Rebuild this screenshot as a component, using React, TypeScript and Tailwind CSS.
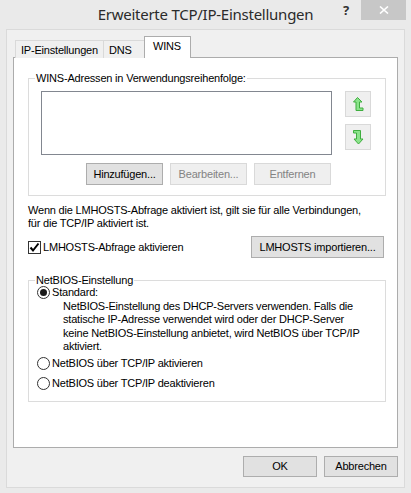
import React from "react";

function UpIcon() {
  return (
    <svg width="11" height="15" viewBox="0 0 11 15">
      <path d="M4.5 0.5 L9 5 L6.5 5 L6.5 11 L10 11 L10 13.5 L3 13.5 L3 5 L0.5 5 Z" fill="#8be38b" stroke="#3fae3f" strokeWidth="1" />
    </svg>
  );
}

function DownIcon() {
  return (
    <svg width="11" height="15" viewBox="0 0 11 15">
      <path d="M0.5 0.5 L7.5 0.5 L7.5 9 L10 9 L5.5 14 L1 9 L3.5 9 L3.5 3 L0.5 3 Z" fill="#8be38b" stroke="#3fae3f" strokeWidth="1" />
    </svg>
  );
}

function Btn({ children, w, disabled }: { children: React.ReactNode; w: string; disabled?: boolean }) {
  return (
    <div
      className={
        "h-[22px] flex items-center justify-center border whitespace-nowrap " +
        w +
        (disabled
          ? " bg-[#efefef] border-[#d9d9d9] text-[#838383]"
          : " bg-[#e1e1e1] border-[#adadad] text-black")
      }
    >
      {children}
    </div>
  );
}

function Radio({ checked }: { checked?: boolean }) {
  return (
    <div className="w-[13px] h-[13px] rounded-full border border-[#333333] bg-white flex items-center justify-center shrink-0">
      {checked ? <div className="w-[7px] h-[7px] rounded-full bg-[#1a1a1a]" /> : null}
    </div>
  );
}

export default function App() {
  return (
    <div className="w-[411px] h-[493px] bg-[#eaeaea] flex flex-col overflow-hidden text-[11px] leading-[13px] tracking-[-0.2px] text-black font-['Liberation_Sans',Arial,sans-serif] whitespace-nowrap">
      {/* Title bar */}
      <div className="relative h-[29px] flex items-center justify-center">
        <span className="text-[15px] tracking-[-0.25px] text-[#2b2b2b] font-['Noto_Sans',sans-serif] -mt-[1px]">
          Erweiterte TCP/IP-Einstellungen
        </span>
        <div className="absolute right-[5px] top-0 flex items-start">
          <span className="w-[16px] mr-[7px] text-center text-[13px] font-bold text-[#333] leading-[20px] font-['Noto_Sans',sans-serif]">?</span>
          <div className="w-[45px] h-[20px] bg-[#c7c7c7] flex items-center justify-center">
            <svg width="10" height="8" viewBox="0 0 10 8">
              <path d="M1 0.5 L9 7.5 M9 0.5 L1 7.5" stroke="white" strokeWidth="1.6" />
            </svg>
          </div>
        </div>
      </div>

      {/* Frame */}
      <div className="mx-[6px] h-[459px] border border-[#dadada] bg-[#f0f0f0] flex flex-col">
        {/* Tabs */}
        <div className="mt-[7px] ml-[8px] h-[21px] flex items-end -mb-px relative z-10">
          <div className="h-[18px] w-[89px] border border-b-0 border-[#d9d9d9] bg-[#f0f0f0] flex items-center pl-[5px] pt-[1px]">
            IP-Einstellungen
          </div>
          <div className="h-[18px] w-[42px] -ml-px border border-b-0 border-[#d9d9d9] bg-[#f0f0f0] flex items-center pl-[5px] pt-[1px]">
            DNS
          </div>
          <div className="h-[22px] w-[47px] -ml-px border border-b-0 border-[#acacac] bg-white flex items-start pl-[8px] pt-[3px]">
            WINS
          </div>
        </div>

        {/* Panel */}
        <div className="ml-[6px] w-[385px] h-[391px] border border-[#acacac] bg-white flex flex-col">
          {/* WINS group */}
          <fieldset className="ml-[14px] mt-[13px] w-[358px] border border-[#dcdcdc] px-[12px] pb-[10px]">
            <legend className="-ml-[6px] px-[1px] leading-[14px]">WINS-Adressen in Verwendungsreihenfolge:</legend>
            <div className="flex mt-[6px]">
              <div className="flex flex-col">
                <div className="w-[291px] h-[64px] border border-[#828790] bg-white" />
                <div className="mt-[8px] flex justify-end gap-[7px] pr-[1px]">
                  <Btn w="w-[77px]">Hinzufügen...</Btn>
                  <Btn w="w-[77px]" disabled>Bearbeiten...</Btn>
                  <Btn w="w-[77px]" disabled>Entfernen</Btn>
                </div>
              </div>
              <div className="ml-[13px] flex flex-col gap-[7px]">
                <div className="w-[26px] h-[26px] border border-[#d9d9d9] bg-[#efefef] flex items-center justify-center">
                  <UpIcon />
                </div>
                <div className="w-[26px] h-[26px] border border-[#d9d9d9] bg-[#efefef] flex items-center justify-center">
                  <DownIcon />
                </div>
              </div>
            </div>
          </fieldset>

          <p className="ml-[14px] mt-[8px] leading-[13px]">
            Wenn die LMHOSTS-Abfrage aktiviert ist, gilt sie für alle Verbindungen,
            <br />
            für die TCP/IP aktiviert ist.
          </p>

          <div className="ml-[14px] mt-[6px] w-[356px] flex items-center justify-between">
            <div className="flex items-center gap-[2px]">
              <div className="w-[13px] h-[13px] border border-[#333333] bg-white flex items-center justify-center">
                <svg width="11" height="11" viewBox="0 0 11 11">
                  <path d="M1.5 5.5 L4 8.5 L9.5 1.5" fill="none" stroke="#000" strokeWidth="2" />
                </svg>
              </div>
              <span>LMHOSTS-Abfrage aktivieren</span>
            </div>
            <Btn w="w-[133px]">LMHOSTS importieren...</Btn>
          </div>

          {/* NetBIOS group */}
          <fieldset className="ml-[14px] mt-[15px] w-[358px] h-[129px] border border-[#dcdcdc] px-[8px]">
            <legend className="-ml-[2px] px-[1px] leading-[14px]">NetBIOS-Einstellung</legend>
            <div className="flex items-center gap-[2px] h-[14px] -mt-[2px]">
              <Radio checked />
              <span>Standard:</span>
            </div>
            <p className="ml-[26px] mt-[1px] leading-[13.4px]">
              NetBIOS-Einstellung des DHCP-Servers verwenden. Falls die
              <br />
              statische IP-Adresse verwendet wird oder der DHCP-Server
              <br />
              keine NetBIOS-Einstellung anbietet, wird NetBIOS über TCP/IP
              <br />
              aktiviert.
            </p>
            <div className="flex items-center gap-[2px] h-[14px] mt-[3px]">
              <Radio />
              <span>NetBIOS über TCP/IP aktivieren</span>
            </div>
            <div className="flex items-center gap-[2px] h-[14px] mt-[6px]">
              <Radio />
              <span>NetBIOS über TCP/IP deaktivieren</span>
            </div>
          </fieldset>
        </div>

        {/* Bottom buttons */}
        <div className="mt-[8px] flex justify-end gap-[7px] pr-[6px]">
          <div className="w-[74px] h-[21px] border border-[#adadad] bg-[#e1e1e1] flex items-center justify-center">OK</div>
          <div className="w-[74px] h-[21px] border border-[#adadad] bg-[#e1e1e1] flex items-center justify-center">Abbrechen</div>
        </div>
      </div>
    </div>
  );
}
